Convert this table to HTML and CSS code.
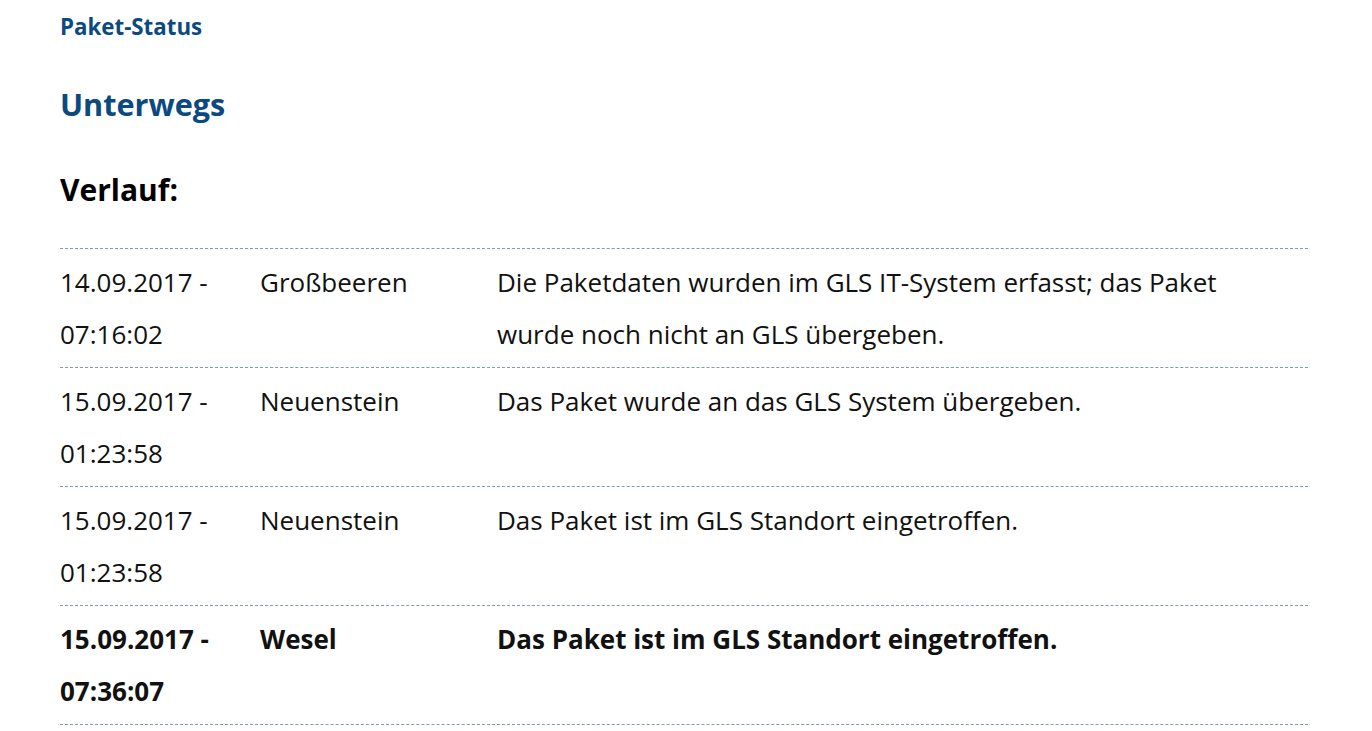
FILE: index.html
```html
<!DOCTYPE html>
<html lang="de">
<head>
<meta charset="utf-8">
<title>Paket-Status</title>
<link rel="stylesheet" href="styles.css">
</head>
<body>
<main class="page">
  <h3 class="label">Paket-Status</h3>
  <h2 class="status">Unterwegs</h2>
  <h2 class="history-title">Verlauf:</h2>
  <div class="history">
    <div class="row">
      <div class="cell c-date">14.09.2017 - 07:16:02</div>
      <div class="cell c-loc">Großbeeren</div>
      <div class="cell c-msg">Die Paketdaten wurden im GLS IT-System erfasst; das Paket wurde noch nicht an GLS übergeben.</div>
    </div>
    <div class="row">
      <div class="cell c-date">15.09.2017 - 01:23:58</div>
      <div class="cell c-loc">Neuenstein</div>
      <div class="cell c-msg">Das Paket wurde an das GLS System übergeben.</div>
    </div>
    <div class="row">
      <div class="cell c-date">15.09.2017 - 01:23:58</div>
      <div class="cell c-loc">Neuenstein</div>
      <div class="cell c-msg">Das Paket ist im GLS Standort eingetroffen.</div>
    </div>
    <div class="row latest">
      <div class="cell c-date">15.09.2017 - 07:36:07</div>
      <div class="cell c-loc">Wesel</div>
      <div class="cell c-msg">Das Paket ist im GLS Standort eingetroffen.</div>
    </div>
  </div>
</main>
</body>
</html>
```
FILE: styles.css
```css
html, body {
  margin: 0;
  padding: 0;
  background: #ffffff;
}
body {
  font-family: "Open Sans", "Noto Sans", sans-serif;
  color: #111111;
}
.page {
  padding: 12px 0 0 60px;
  width: 1248px;
}
.label {
  margin: 0;
  font-size: 22.3px;
  line-height: 30px;
  font-weight: 700;
  color: #0b4a80;
}
.status {
  margin: 42px 0 0 0;
  font-size: 30.6px;
  line-height: 40px;
  font-weight: 700;
  color: #0b4a80;
}
.history-title {
  margin: 46px 0 0 0;
  font-size: 30px;
  line-height: 40px;
  font-weight: 700;
  color: #000000;
}
.history {
  margin-top: 38px;
}
.row {
  display: flex;
  gap: 2px;
}
.cell {
  border-top: 1px dashed #7d9db3;
  padding: 7px 0 7px 0;
  font-size: 26px;
  line-height: 52px;
}
.history .row:last-child .cell {
  border-bottom: 1px dashed #7d9db3;
}
.c-date {
  width: 158px;
  padding-right: 40px;
}
.c-loc {
  width: 235px;
}
.c-msg {
  flex: 1;
  padding-right: 50px;
}
.latest .cell {
  font-weight: 700;
}
```
